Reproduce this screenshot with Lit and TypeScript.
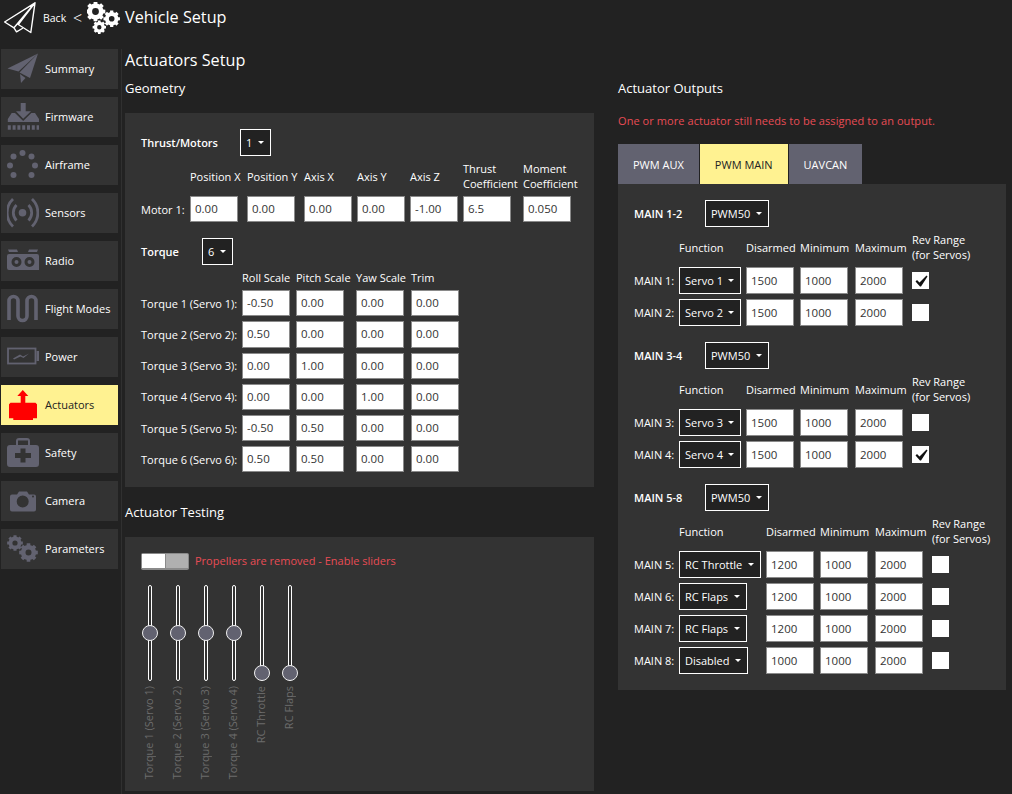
import { LitElement, html, css, svg } from "lit";
import { customElement } from "lit/decorators.js";

function gearPath(cx: number, cy: number, r: number, hole: number, teeth = 8): string {
  const outer = r;
  const inner = r * 0.8;
  let d = "";
  const step = (Math.PI * 2) / teeth;
  for (let i = 0; i < teeth; i++) {
    const a = i * step - step / 2;
    const pts: [number, number][] = [
      [inner, a + step * 0.0],
      [inner, a + step * 0.18],
      [outer, a + step * 0.26],
      [outer, a + step * 0.74],
      [inner, a + step * 0.82],
    ];
    for (const [rad, an] of pts) {
      d += `${d ? "L" : "M"}${(cx + rad * Math.cos(an)).toFixed(2)} ${(cy + rad * Math.sin(an)).toFixed(2)}`;
    }
  }
  d += "Z";
  d += `M${cx - hole} ${cy}a${hole} ${hole} 0 1 0 ${hole * 2} 0a${hole} ${hole} 0 1 0 ${-hole * 2} 0Z`;
  return d;
}

const G = "#626270";
const icons: Record<string, unknown> = {
  Summary: svg`<path fill="${G}" d="M31 0.5 0.5 15.5 11.5 18.5Z"/><path fill="${G}" d="M31 0.5 12.5 19.5 23 25Z"/><path fill="${G}" d="M13 21 14 30 18.5 25Z"/>`,
  Firmware: svg`<path fill="${G}" d="M13.700 2h5v8.300H24L16.200 17.700 9 10.300h4.700Z"/><path fill="${G}" d="M.8 21V18L4.700 12H8L16.200 20 24.300 12H28L32 18V21Z"/><path stroke="${G}" stroke-width="4.400" stroke-dasharray="3 1.800" d="M.8 26.500H32"/>`,
  Airframe: svg`<g fill="${G}"><circle cx="15.5" cy="4" r="3"/><circle cx="6.5" cy="7.5" r="3"/><circle cx="24.5" cy="7.5" r="3"/><circle cx="3" cy="16.5" r="3"/><circle cx="28" cy="16.5" r="3"/><circle cx="6.5" cy="26" r="3"/><circle cx="24.5" cy="26" r="3"/></g>`,
  Sensors: svg`<circle cx="15.5" cy="15.7" r="3.8" fill="${G}"/><g fill="none" stroke="${G}" stroke-width="2.800"><path d="M9.5 8a11 11 0 0 0 0 15.5M21.5 8a11 11 0 0 1 0 15.5"/><path d="M6 2a19 19 0 0 0 0 27.5M25 2a19 19 0 0 1 0 27.5"/></g>`,
  Radio: svg`<path fill-rule="evenodd" fill="${G}" d="M2 9h28a2 2 0 0 1 2 2v14H2a2 2 0 0 1-2-2V11a2 2 0 0 1 2-2ZM9.5 12a5 5 0 1 0 0 10 5 5 0 0 0 0-10ZM22.5 12a5 5 0 1 0 0 10 5 5 0 0 0 0-10Z"/><circle cx="9.5" cy="17" r="2" fill="${G}"/><circle cx="22.5" cy="17" r="2" fill="${G}"/><path fill="${G}" d="M1 4.500h9l1 2.500H2ZM22 4.500h9l-1 2.500h-9Z"/>`,
  "Flight Modes": svg`<path fill="none" stroke="${G}" stroke-width="3.6" d="M2 27V8a4.500 4.500 0 0 1 9 0V23a4.500 4.500 0 0 0 9 0V8a4.500 4.500 0 0 1 9 0V27"/>`,
  Power: svg`<rect x="1" y="7.500" width="27.500" height="15" fill="none" stroke="${G}" stroke-width="1.800"/><path fill="${G}" d="M29.500 10H32v10h-2.500Z"/><path fill="${G}" d="M6 17.500 13 13.500 16 15.500 22 12.500 16.500 17 13.500 15.500 7 18.500Z"/>`,
  Actuators: svg`<path fill="#f00" d="M2 15.200 3.500 13.700H28.500L30 15.200V29.300H26V31H6.300V29.300H2ZM13.700 13.700V7H10.300L15.800 1 21.300 7H18.300V13.700Z"/>`,
  Safety: svg`<path fill-rule="evenodd" fill="${G}" d="M3 8h6V4a3 3 0 0 1 3-3h8a3 3 0 0 1 3 3v4h6a3 3 0 0 1 3 3v16a3 3 0 0 1-3 3H3a3 3 0 0 1-3-3V11a3 3 0 0 1 3-3ZM11 3.500V8h10V3.500ZM13.500 11.500v4.500h-5.500v5h5.500v4.500h5v-4.500h5.500v-5h-5.500v-4.500Z"/>`,
  Camera: svg`<path fill-rule="evenodd" fill="${G}" d="M5 9.500h5l2-3h8l2 3h5a2 2 0 0 1 2 2v13a2 2 0 0 1-2 2H5a2 2 0 0 1-2-2v-13a2 2 0 0 1 2-2ZM15.700 10.500a6 6 0 1 0 0 12 6 6 0 0 0 0-12Z"/><circle cx="26" cy="11.500" r="1" fill="#333"/>`,
  Parameters: svg`<path fill-rule="evenodd" fill="${G}" d="${gearPath(8, 10, 8, 2.6)}"/><path fill-rule="evenodd" fill="${G}" d="${gearPath(21.5, 19.5, 9.5, 3)}"/>`,
};

const sidebar = ["Summary", "Firmware", "Airframe", "Sensors", "Radio", "Flight Modes", "Power", "Actuators", "Safety", "Camera", "Parameters"];

const motorHeads: string[][] = [["Position X"], ["Position Y"], ["Axis X"], ["Axis Y"], ["Axis Z"], ["Thrust", "Coefficient"], ["Moment", "Coefficient"]];
const motorVals = ["0.00", "0.00", "0.00", "0.00", "-1.00", "6.5", "0.050"];
const torques: [string, string[]][] = [
  ["Torque 1 (Servo 1):", ["-0.50", "0.00", "0.00", "0.00"]],
  ["Torque 2 (Servo 2):", ["0.50", "0.00", "0.00", "0.00"]],
  ["Torque 3 (Servo 3):", ["0.00", "1.00", "0.00", "0.00"]],
  ["Torque 4 (Servo 4):", ["0.00", "0.00", "1.00", "0.00"]],
  ["Torque 5 (Servo 5):", ["-0.50", "0.50", "0.00", "0.00"]],
  ["Torque 6 (Servo 6):", ["0.50", "0.50", "0.00", "0.00"]],
];
const sliders: [string, boolean][] = [
  ["Torque 1 (Servo 1)", false],
  ["Torque 2 (Servo 2)", false],
  ["Torque 3 (Servo 3)", false],
  ["Torque 4 (Servo 4)", false],
  ["RC Throttle", true],
  ["RC Flaps", true],
];
type Row = [string, string, string, string, string, boolean];
const groups: { name: string; wide: boolean; rows: Row[] }[] = [
  { name: "MAIN 1-2", wide: false, rows: [
    ["MAIN 1:", "Servo 1", "1500", "1000", "2000", true],
    ["MAIN 2:", "Servo 2", "1500", "1000", "2000", false],
  ] },
  { name: "MAIN 3-4", wide: false, rows: [
    ["MAIN 3:", "Servo 3", "1500", "1000", "2000", false],
    ["MAIN 4:", "Servo 4", "1500", "1000", "2000", true],
  ] },
  { name: "MAIN 5-8", wide: true, rows: [
    ["MAIN 5:", "RC Throttle", "1200", "1000", "2000", false],
    ["MAIN 6:", "RC Flaps", "1200", "1000", "2000", false],
    ["MAIN 7:", "RC Flaps", "1200", "1000", "2000", false],
    ["MAIN 8:", "Disabled", "1000", "1000", "2000", false],
  ] },
];

@customElement("app-root")
export class AppRoot extends LitElement {
  static styles = css`
    :host { display: block; width: 1012px; height: 794px; overflow: hidden; background: #222222; color: #fff;
      font-family: "Open Sans", sans-serif; font-size: 11px; line-height: 15px; }
    .top { display: flex; align-items: center; height: 36px; padding-left: 4px; }
    .top svg { display: block; flex: none; }
    .back { margin-left: 6px; font-size: 10.5px; width: 25px; }
    .lt { margin-left: 5px; font-size: 16px; width: 14px; margin-top: 1px; font-weight: 300; }
    .veh { font-size: 16.2px; margin-left: 5px; margin-top: -2px; }
    .body { display: flex; margin-top: 13px; height: 745px; }
    .side { width: 122px; flex: none; box-sizing: border-box; padding-left: 1px; border-right: 1px solid #303030; display: flex; flex-direction: column; gap: 8px; }
    .nav { width: 117px; height: 40px; flex: none; background: #333333; display: flex; align-items: center; padding-left: 6px; box-sizing: border-box; gap: 6px; }
    .nav svg { flex: none; display: block; }
    .nav span { padding-bottom: 2px; }
    .nav.on { background: #fff291; color: #222; }
    .content { display: grid; grid-template-columns: 469px 388px; column-gap: 24px; padding-left: 3px; grid-template-rows: 22px auto; }
    .title { grid-column: 1 / 3; font-size: 16.2px; line-height: 22px; }
    .h { font-size: 13px; line-height: 20px; margin-top: 7px; }
    .panel { background: #333333; padding: 16px; box-sizing: border-box; }
    .geo { margin-top: 15px; height: 374px; }
    .test-h { margin-top: 15px; }
    .test { margin-top: 15px; height: 254px; }
    .head { display: flex; align-items: center; font-weight: 600; }
    .head .t1 { width: 99px; } .head .t2 { width: 61px; } .head .t3 { width: 71px; }
    .sel { height: 27px; box-sizing: border-box; border: 1px solid #fff; background: #222222; display: inline-flex; align-items: center; padding: 0 6px 0 5px; gap: 5.5px; font-weight: 400; white-space: nowrap; justify-self: start; }
    .sel::after { content: ""; width: 0; height: 0; border-left: 3px solid transparent; border-right: 3px solid transparent; border-top: 3px solid #fff; }
    .grid { display: grid; column-gap: 5px; row-gap: 5px; margin-top: 5px; align-items: center; white-space: nowrap; justify-content: start; }
    .motor { grid-template-columns: 44px 52px 52px 48px 48px 48px 55px 48px; }
    .motor.grid { margin-bottom: 16px; }
    .torque { grid-template-columns: 96px 49px 55px 50px 48px; grid-template-rows: 15px repeat(6, 26.2px); }
    input { box-sizing: border-box; width: 48px; height: 26.2px; border: 1px solid #8a8a8a; border-bottom-width: 1.500px; background: #fff; color: #333; font: 11.5px "Open Sans", sans-serif; padding: 0 0 1px 4px; margin: 0; outline: none; display: block; }
    .err { color: #e84c55; }
    .sw-row .err { padding-bottom: 2px; }
    .out-err { margin-top: 15px; height: 15px; letter-spacing: 0.07px; }
    .tabs { display: flex; gap: 1px; margin-top: 16px; }
    .tab { height: 40px; background: #626270; padding: 0 15px; display: flex; align-items: center; }
    .tab.on { background: #fff291; color: #222; }
    .outputs { height: 506px; display: flex; flex-direction: column; gap: 16px; }
    .main { grid-template-columns: 40px 62px 49px 50px 52px auto; grid-auto-rows: auto; }
    .main.w { grid-template-columns: 40px 82px 49px 50px 52px auto; }
    .chk { width: 17px; height: 17px; background: #fff; display: block; }
    .sw-row { display: flex; align-items: center; gap: 6px; height: 17px; }
    .sw { width: 48px; height: 17px; box-sizing: border-box; border: 1px solid #8a8a8a; border-bottom-width: 2px; display: flex; border-radius: 2px; background: #b0b0b0; }
    .sw i { width: 23px; background: #fff; border-right: 1px solid #8a8a8a; }
    .sliders { display: flex; gap: 10px; margin-top: 15px; }
    .sl { width: 18px; display: flex; flex-direction: column; align-items: center; position: relative; }
    .track { width: 4.500px; height: 96px; box-sizing: border-box; border: 1px solid #fff; border-radius: 2px; background: #333; }
    .thumb { position: absolute; left: 1px; top: 39.500px; width: 16px; height: 16px; box-sizing: border-box; border: 1px solid #f0f0f0; border-radius: 50%; background: #626270; }
    .thumb.low { top: 79.500px; }
    .lab { writing-mode: vertical-rl; transform: rotate(180deg); margin: 5px 3px 0 0; color: #6c6c6c; white-space: nowrap; width: 15px; }
  `;

  private sel(t: string) {
    return html`<div class="sel">${t}</div>`;
  }

  private check() {
    return html`<svg class="chk" viewBox="0 0 17 17"><path fill="#111" d="M3.500 9.500 5 8 7.500 10.500 14.500 3.500 15.500 4.500 9 14.500H8Z"/></svg>`;
  }

  private blank() {
    return html`<div class="chk"></div>`;
  }

  render() {
    return html`
      <div class="top">
        <svg width="33" height="33" viewBox="0 0 33 33" fill="none" stroke="#fff" stroke-width="1.400" stroke-linejoin="round" stroke-linecap="round">
          <path d="M31 .8 .6 20 10 25.800ZM31 .8 14.300 22.500 26.800 30.500ZM10 25.800 12.500 29.800 18.300 26.500"/>
        </svg>
        <span class="back">Back</span>
        <span class="lt">&lt;</span>
        <svg width="33" height="33" viewBox="0 0 33 33">
          <path fill="#fff" fill-rule="evenodd" d="${gearPath(8.5, 9.5, 10, 3.4)}"/>
          <path fill="#fff" fill-rule="evenodd" d="${gearPath(24.7, 16.8, 8.4, 2.8)}"/>
          <path fill="#fff" fill-rule="evenodd" d="${gearPath(12.3, 25.2, 6.8, 2.2)}"/>
        </svg>
        <span class="veh">Vehicle Setup</span>
      </div>
      <div class="body">
        <div class="side">
          ${sidebar.map((s) => html`<div class="nav ${s === "Actuators" ? "on" : ""}"><svg width="32" height="32" viewBox="0 0 32 32">${icons[s]}</svg><span>${s}</span></div>`)}
        </div>
        <div class="content">
          <div class="title">Actuators Setup</div>
          <div>
            <div class="h">Geometry</div>
            <div class="panel geo">
              <div class="head"><span class="t1">Thrust/Motors</span>${this.sel("1")}</div>
              <div class="grid motor">
                <span></span>
                ${motorHeads.map((h) => html`<div>${h.map((l) => html`${l}<br />`)}</div>`)}
                <span>Motor 1:</span>
                ${motorVals.map((v) => html`<input .value=${v} />`)}
              </div>
              <div class="head"><span class="t2">Torque</span>${this.sel("6")}</div>
              <div class="grid torque">
                <span></span>
                ${["Roll Scale", "Pitch Scale", "Yaw Scale", "Trim"].map((h) => html`<span>${h}</span>`)}
                ${torques.map(([l, vs]) => html`<span>${l}</span>${vs.map((v) => html`<input .value=${v} />`)}`)}
              </div>
            </div>
            <div class="h test-h">Actuator Testing</div>
            <div class="panel test">
              <div class="sw-row"><div class="sw"><i></i></div><span class="err">Propellers are removed - Enable sliders</span></div>
              <div class="sliders">
                ${sliders.map(([l, low]) => html`<div class="sl"><div class="track"></div><div class="thumb ${low ? "low" : ""}"></div><div class="lab">${l}</div></div>`)}
              </div>
            </div>
          </div>
          <div>
            <div class="h">Actuator Outputs</div>
            <div class="err out-err">One or more actuator still needs to be assigned to an output.</div>
            <div class="tabs">
              <div class="tab">PWM AUX</div><div class="tab on">PWM MAIN</div><div class="tab">UAVCAN</div>
            </div>
            <div class="panel outputs">
              ${groups.map((g) => html`
                <div>
                  <div class="head"><span class="t3">${g.name}</span>${this.sel("PWM50")}</div>
                  <div class="grid main ${g.wide ? "w" : ""}">
                    <span></span><span>Function</span><span>Disarmed</span><span>Minimum</span><span>Maximum</span><span>Rev Range<br />(for Servos)</span>
                    ${g.rows.map((r) => html`
                      <span>${r[0]}</span>${this.sel(r[1])}
                      <input .value=${r[2]} /><input .value=${r[3]} /><input .value=${r[4]} />
                      <span>${r[5] ? this.check() : this.blank()}</span>
                    `)}
                  </div>
                </div>
              `)}
            </div>
          </div>
        </div>
      </div>
    `;
  }
}
